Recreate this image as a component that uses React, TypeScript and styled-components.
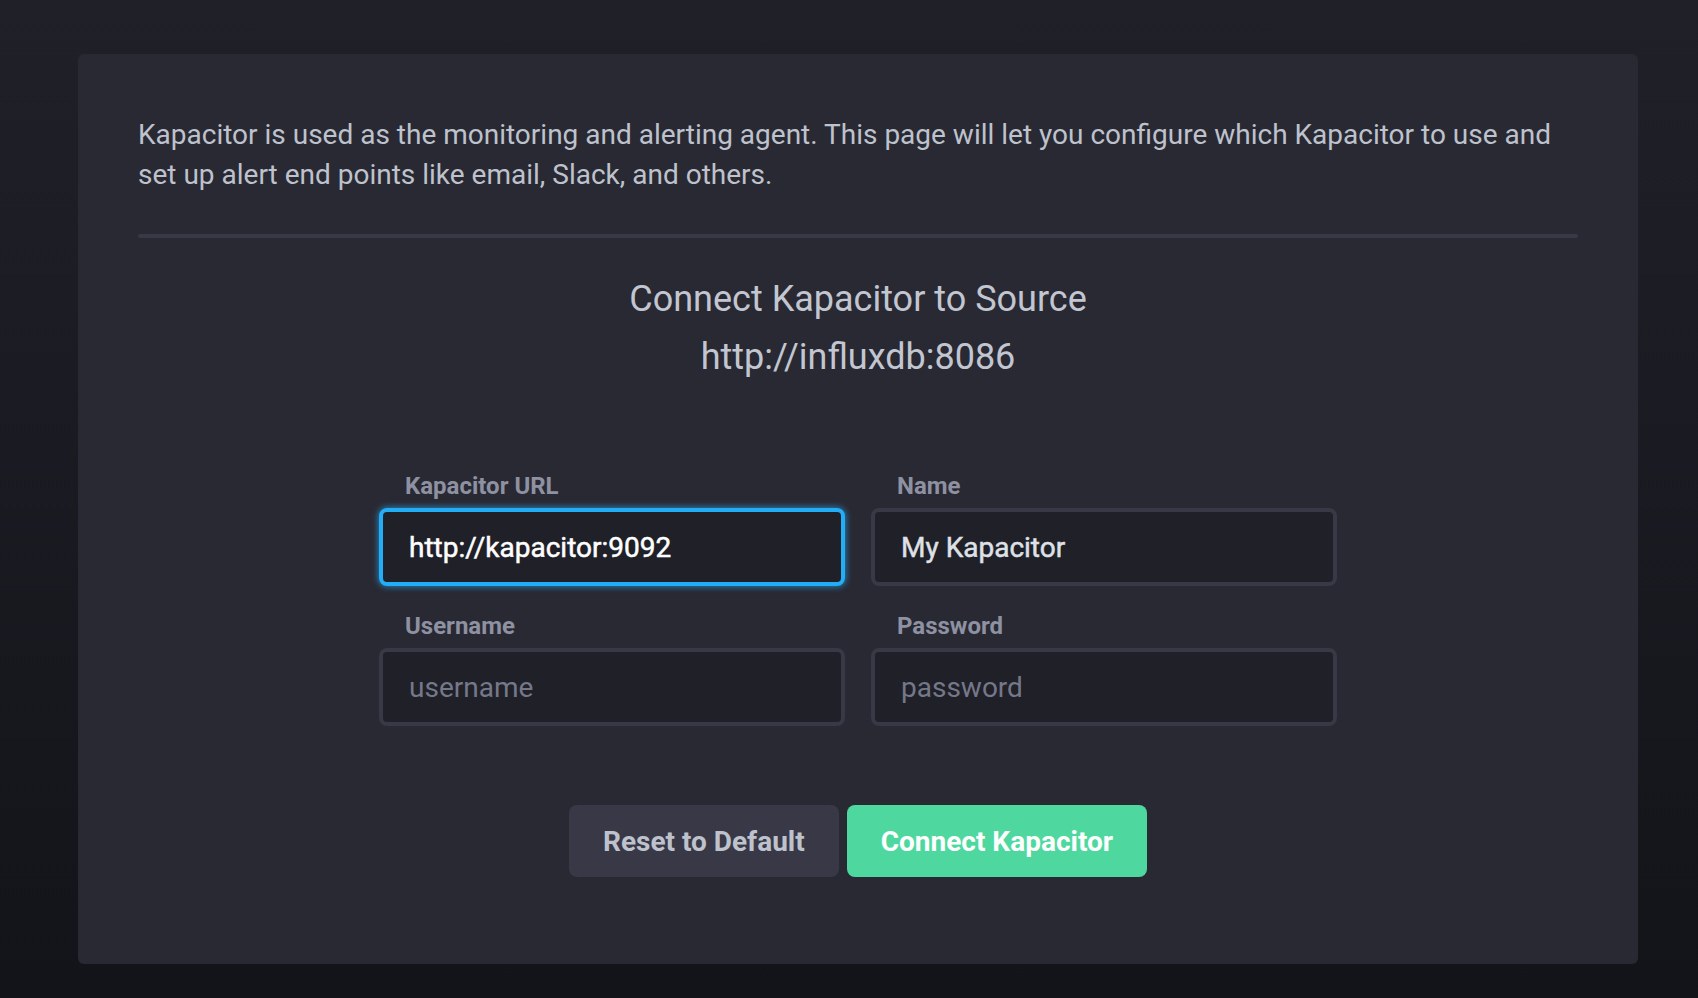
import React from 'react';
import styled, { createGlobalStyle, css } from 'styled-components';

const GlobalStyle = createGlobalStyle`
  html, body {
    margin: 0;
    padding: 0;
  }

  body {
    min-height: 998px;
    background: linear-gradient(to bottom, #202028 0%, #13131a 100%);
    font-family: Roboto, "Liberation Sans", sans-serif;
    -webkit-font-smoothing: antialiased;
  }

  * {
    box-sizing: border-box;
  }
`;

const Page = styled.div`
  padding: 54px 60px 34px 78px;
`;

const Panel = styled.section`
  background: #292933;
  border-radius: 6px;
  padding: 61px 60px 87px;
`;

const Intro = styled.p`
  margin: 0;
  font-size: 28px;
  line-height: 40px;
  color: #bec2cc;
`;

const Divider = styled.hr`
  border: none;
  height: 4px;
  border-radius: 2px;
  background: #383846;
  margin: 39px 0 32px;
`;

const Heading = styled.h3`
  margin: 0 0 87px;
  text-align: center;
  font-size: 36px;
  font-weight: 400;
  line-height: 58px;
  color: #c2c6d0;

  span {
    display: block;
  }
`;

const FormGrid = styled.div`
  display: grid;
  grid-template-columns: 466px 466px;
  column-gap: 26px;
  row-gap: 27px;
  justify-content: center;
`;

const Field = styled.div`
  display: flex;
  flex-direction: column;
`;

const Label = styled.label`
  font-size: 24px;
  line-height: 26px;
  font-weight: 700;
  color: #8e91a1;
  padding-left: 26px;
  margin-bottom: 9px;
`;

const Input = styled.input<{ $focused?: boolean }>`
  height: 78px;
  width: 100%;
  padding: 0 26px;
  border: 4px solid #383846;
  border-radius: 8px;
  background: #202028;
  color: #dfe1e6;
  font-family: Roboto, "Liberation Sans", sans-serif;
  font-size: 28px;
  font-weight: 400;
  -webkit-text-stroke: 0.5px currentColor;
  outline: none;

  &::placeholder {
    color: #757888;
    -webkit-text-stroke: 0;
  }

  &:placeholder-shown {
    -webkit-text-stroke: 0;
  }

  ${(p) =>
    p.$focused &&
    css`
      border-color: #22adf6;
      color: #ffffff;
      box-shadow: 0 0 6px 1px rgba(34, 173, 246, 0.65);
    `}
`;

const Actions = styled.div`
  display: flex;
  justify-content: center;
  gap: 8px;
  margin-top: 79px;
`;

const Button = styled.button<{ $variant: 'default' | 'success' }>`
  height: 72px;
  padding: 0 34px;
  border: none;
  border-radius: 8px;
  font-family: Roboto, "Liberation Sans", sans-serif;
  font-size: 28px;
  font-weight: 700;
  cursor: pointer;
  background: ${(p) => (p.$variant === 'success' ? '#4ed8a0' : '#383846')};
  color: ${(p) => (p.$variant === 'success' ? '#ffffff' : '#bec2cc')};
`;

const App: React.FC = () => {
  return (
    <>
      <GlobalStyle />
      <Page>
        <Panel>
          <Intro>
            Kapacitor is used as the monitoring and alerting agent. This page will let you configure which
            Kapacitor to use and set up alert end points like email, Slack, and others.
          </Intro>
          <Divider />
          <Heading>
            <span>Connect Kapacitor to Source</span>
            <span>http://influxdb:8086</span>
          </Heading>

          <FormGrid>
            <Field>
              <Label htmlFor="kapaUrl">Kapacitor URL</Label>
              <Input id="kapaUrl" $focused defaultValue="http://kapacitor:9092" />
            </Field>
            <Field>
              <Label htmlFor="name">Name</Label>
              <Input id="name" defaultValue="My Kapacitor" />
            </Field>
            <Field>
              <Label htmlFor="username">Username</Label>
              <Input id="username" placeholder="username" />
            </Field>
            <Field>
              <Label htmlFor="password">Password</Label>
              <Input id="password" type="password" placeholder="password" />
            </Field>
          </FormGrid>

          <Actions>
            <Button $variant="default">Reset to Default</Button>
            <Button $variant="success">Connect Kapacitor</Button>
          </Actions>
        </Panel>
      </Page>
    </>
  );
};

export default App;
